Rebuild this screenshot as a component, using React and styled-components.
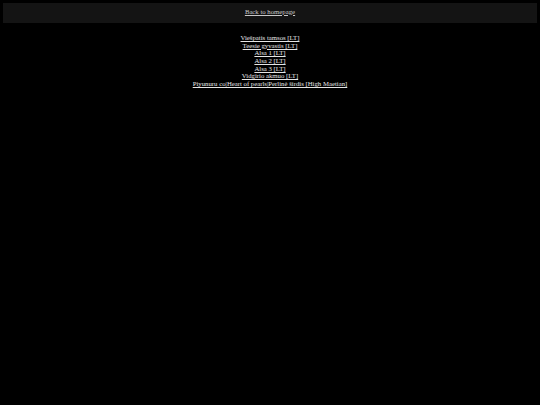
import React from "react";
import styled, { createGlobalStyle } from "styled-components";

const GlobalStyle = createGlobalStyle`
  html, body {
    background: #000;
  }
  body {
    margin: 3px;
    font-family: "Liberation Serif", "Times New Roman", serif;
    font-size: 6.75px;
    line-height: 7.67px;
    color: #ddd;
  }
`;

const TopBar = styled.div`
  background: #141414;
  height: 20px;
  box-sizing: border-box;
  padding-bottom: 3px;
  display: flex;
  align-items: center;
  justify-content: center;
`;

const HomeLink = styled.a`
  color: #c8c8c8;
  text-decoration: underline;
`;

const List = styled.div`
  display: flex;
  flex-direction: column;
  align-items: center;
  margin-top: 11px;
`;

const ItemLink = styled.a`
  color: #e6e6e6;
  text-decoration: underline;
`;

const items = [
  "Viešpatis tamsos [LT]",
  "Teesie gyvastis [LT]",
  "Alsa 1 [LT]",
  "Alsa 2 [LT]",
  "Alsa 3 [LT]",
  "Vidgirio akmuo [LT]",
  "Piyunuru co|Heart of pearls|Perlinė širdis [High Maetian]"
];

const App = () => {
  return (
    <>
      <GlobalStyle />
      <TopBar>
        <HomeLink href="#">Back to homepage</HomeLink>
      </TopBar>
      <List>
        {items.map(item => (
          <ItemLink key={item} href="#">
            {item}
          </ItemLink>
        ))}
      </List>
    </>
  );
};

export default App;
